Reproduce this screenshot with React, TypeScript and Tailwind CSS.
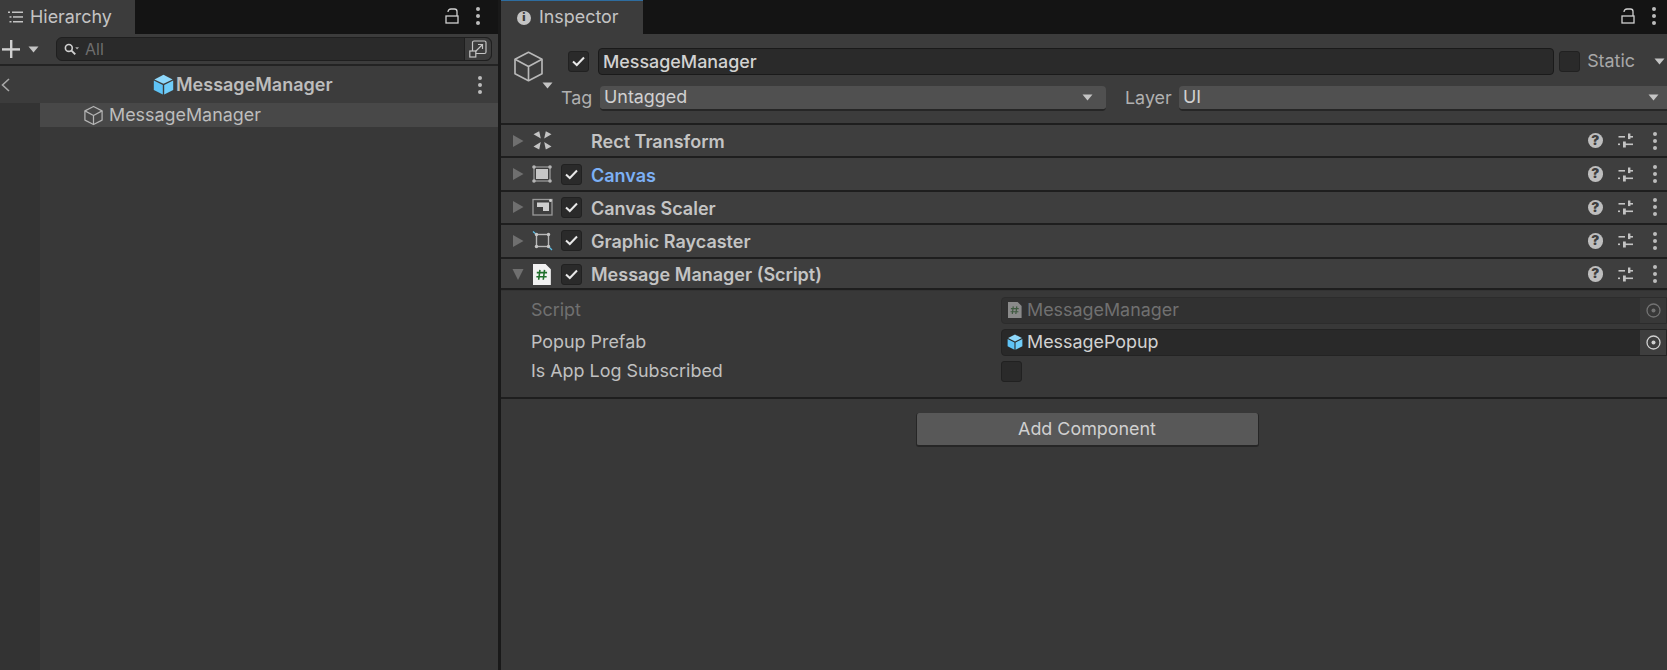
import React from "react";

function Dots({ className = "" }: { className?: string }) {
  return (
    <div className={`flex flex-col items-center gap-[3px] w-[4px] ${className}`}>
      <span className="w-[4px] h-[4px] rounded-full bg-[#bcbcbc]" />
      <span className="w-[4px] h-[4px] rounded-full bg-[#bcbcbc]" />
      <span className="w-[4px] h-[4px] rounded-full bg-[#bcbcbc]" />
    </div>
  );
}

function Lock() {
  return (
    <svg width="14" height="16" viewBox="0 0 14 16" fill="none" stroke="#d0d0d0" strokeWidth="1.3">
      <rect x="1" y="8" width="12" height="7" />
      <path d="M3 4C3 2.2 4.4 1 6 1H9.5C11 1 12 2 12 3.5V8" />
    </svg>
  );
}

function Cube({ size = 22, color = "#c2c2c2", sw = 1.4 }: { size?: number; color?: string; sw?: number }) {
  return (
    <svg width={size} height={size} viewBox="0 0 22 22" fill="none" stroke={color} strokeWidth={sw} strokeLinejoin="round">
      <path d="M11 1.5L20 6.2V15.8L11 20.5L2 15.8V6.2Z" />
      <path d="M2 6.2L11 11L20 6.2M11 11V20.5" />
    </svg>
  );
}

function BlueCube({ size = 21 }: { size?: number }) {
  return (
    <svg width={size} height={size} viewBox="0 0 21 21">
      <path d="M10.5 .8L19.6 5.4L10.5 9.8L1.4 5.4Z" fill="#8ed8fb" />
      <path d="M.8 6.6L9.8 11V20.6L.8 16Z" fill="#5ec3f6" />
      <path d="M20.2 6.6L11.2 11V20.6L20.2 16Z" fill="#6fcdfa" />
    </svg>
  );
}

function Caret({ className = "" }: { className?: string }) {
  return (
    <svg width="11" height="7" viewBox="0 0 11 7" className={className}>
      <path d="M0.5 0.5H10.5L5.5 6.5Z" fill="#c4c4c4" />
    </svg>
  );
}

function Check({ on = true }: { on?: boolean }) {
  return (
    <div className="w-[21px] h-[21px] rounded-[3px] bg-[#2a2a2a] border border-[#212121] flex items-center justify-center shrink-0">
      {on && (
        <svg width="13" height="11" viewBox="0 0 13 11" fill="none" stroke="#e8e8e8" strokeWidth="2">
          <path d="M1 5.5L4.8 9L12 1.5" />
        </svg>
      )}
    </div>
  );
}

function Help() {
  return (
    <div className="w-[15.5px] h-[15.5px] rounded-full bg-[#bebebe] flex items-center justify-center text-[13.5px] font-black leading-none text-[#3e3e3e]">
      ?
    </div>
  );
}

function Sliders() {
  return (
    <svg width="15" height="15" viewBox="0 0 15 15" fill="#c4c4c4">
      <rect x="0.5" y="3" width="6.5" height="1.6" />
      <rect x="10" y="0.5" width="2.4" height="5.6" />
      <rect x="10" y="3" width="5" height="1.6" />
      <rect x="0" y="10.5" width="2" height="1.6" />
      <rect x="5" y="8.5" width="2.8" height="6" />
      <rect x="5" y="10.5" width="10" height="1.6" />
    </svg>
  );
}

function Target({ dim = false }: { dim?: boolean }) {
  const c = dim ? "#737373" : "#d0d0d0";
  return (
    <svg width="15" height="15" viewBox="0 0 15 15" fill="none">
      <circle cx="7.5" cy="7.5" r="6.5" stroke={c} strokeWidth="1.3" />
      <circle cx="7.5" cy="7.5" r="2" fill={c} />
    </svg>
  );
}

function ScriptIcon({ dim = false, size = 21 }: { dim?: boolean; size?: number }) {
  return (
    <svg width={size * 0.85} height={size} viewBox="0 0 17 20">
      <path d="M0 0H12L17 5V20H0Z" fill={dim ? "#8a8a8a" : "#f2f2f2"} />
      <path
        d="M6.6 5.5L5.4 15M11 5.5L9.8 15M3.6 8.2H13.4M3.2 12.2H13"
        stroke={dim ? "#3f5a40" : "#20702c"}
        strokeWidth="1.5"
        fill="none"
      />
    </svg>
  );
}

function RectTransformIcon() {
  return (
    <svg width="19" height="19" viewBox="0 0 19 19" fill="#c4c4c4">
      <path d="M0.5 3.2L6.2 0.3L7.8 7.6Z" />
      <path d="M18.5 3.2L12.8 0.3L11.2 7.6Z" />
      <path d="M0.5 15.4L6.2 18.4L7.8 11Z" />
      <path d="M18.5 15.4L12.8 18.4L11.2 11Z" />
    </svg>
  );
}

function CanvasIcon() {
  return (
    <svg width="20" height="18" viewBox="0 0 20 18">
      <rect x="2" y="2" width="16" height="14" fill="#3e3e3e" stroke="#a0a0a0" strokeWidth="1.2" />
      <rect x="4" y="4" width="12" height="10" fill="#c6c6c6" />
      <circle cx="2" cy="2" r="1.8" fill="#b5b5b5" />
      <circle cx="18" cy="2" r="1.8" fill="#b5b5b5" />
      <circle cx="2" cy="16" r="1.8" fill="#b5b5b5" />
      <circle cx="18" cy="16" r="1.8" fill="#b5b5b5" />
    </svg>
  );
}

function ScalerIcon() {
  return (
    <svg width="21" height="18" viewBox="0 0 21 18" fill="none">
      <rect x="1" y="1.5" width="19" height="15.5" stroke="#9a9a9a" strokeWidth="1.3" />
      <path d="M5 4.5H17V13H11V9H5Z" fill="#cfcfcf" />
      <circle cx="18.5" cy="2.5" r="1.5" fill="#cfcfcf" />
    </svg>
  );
}

function RaycasterIcon() {
  return (
    <svg width="21" height="20" viewBox="0 0 21 20" fill="none">
      <rect x="4.5" y="3.5" width="12" height="12" stroke="#b8b8b8" strokeWidth="1.4" />
      <path d="M1 0.5L4.5 3.5M16.5 15.5L20 19" stroke="#5cc0e8" strokeWidth="1.3" />
      <circle cx="4.5" cy="3.5" r="1.7" fill="#c4c4c4" />
      <circle cx="16.5" cy="3.5" r="1.7" fill="#c4c4c4" />
      <circle cx="4.5" cy="15.5" r="1.7" fill="#c4c4c4" />
      <circle cx="16.5" cy="15.5" r="1.7" fill="#c4c4c4" />
    </svg>
  );
}

function Arrow({ open = false }: { open?: boolean }) {
  return (
    <svg width="12" height="14" viewBox="0 0 12 14" className="shrink-0">
      {open ? <path d="M0.5 2H11.5L6 13Z" fill="#6f6f6f" /> : <path d="M1 1L11.5 7L1 13Z" fill="#6f6f6f" />}
    </svg>
  );
}

function ComponentRow({
  label,
  icon,
  check = true,
  blue = false,
  open = false,
}: {
  label: string;
  icon: React.ReactNode;
  check?: boolean;
  blue?: boolean;
  open?: boolean;
}) {
  return (
    <div className={`flex items-center border-b-2 border-[#1e1e1e] bg-[#3e3e3e] pl-[11px] pr-[10px] shrink-0 ${open ? "h-[31px] border-b-0 pt-[2px]" : "h-[33.4px]"}`}>
      <Arrow open={open} />
      <div className="w-[22px] ml-[7px] flex justify-center shrink-0">{icon}</div>
      <div className="w-[21px] ml-[8px] shrink-0">{check && <Check />}</div>
      <span className={`ml-[9px] text-[18px] font-semibold ${open ? "pt-[1px]" : "pt-[2px]"} ${blue ? "text-[#7cb0f5]" : "text-[#c4c4c4]"}`}>{label}</span>
      <div className="ml-auto flex items-center">
        <Help />
        <div className="ml-[15px]">
          <Sliders />
        </div>
        <Dots className="ml-[20px]" />
      </div>
    </div>
  );
}

function ObjectField({ icon, label, dim = false }: { icon: React.ReactNode; label: string; dim?: boolean }) {
  return (
    <div className={`flex-1 flex items-center h-[27px] rounded-l-[4px] border ${dim ? "bg-[#313131] border-[#2c2c2c]" : "bg-[#292929] border-[#232323]"}`}>
      <div className="w-[16px] ml-[5px] flex justify-center shrink-0">{icon}</div>
      <span className={`ml-[4px] ${dim ? "text-[#707070] pt-[1px]" : "text-[#d2d2d2]"}`}>{label}</span>
      <div className={`ml-auto w-[26px] h-full flex items-center justify-center ${dim ? "bg-[#383838]" : "bg-[#3e3e3e]"}`}>
        <Target dim={dim} />
      </div>
    </div>
  );
}

function PropRow({ label, dim = false, className = "", children }: { label: string; dim?: boolean; className?: string; children: React.ReactNode }) {
  return (
    <div className={`flex items-center ${className}`}>
      <span className={`w-[470px] shrink-0 leading-none ${dim ? "text-[#707070]" : "text-[#c0c0c0]"}`}>{label}</span>
      {children}
    </div>
  );
}

export default function App() {
  return (
    <div className="flex w-[1667px] h-[670px] overflow-hidden bg-[#191919] text-[#c4c4c4] font-['Inter','Noto_Sans',sans-serif] text-[17.9px]">
      {/* Hierarchy */}
      <div className="w-[498px] h-full flex flex-col shrink-0">
        <div className="flex items-center h-[34px] bg-[#141414] shrink-0">
          <div className="flex items-center w-[135px] h-full bg-[#3c3c3c] pl-[8px]">
            <svg width="15" height="12" viewBox="0 0 15 12" fill="#c4c4c4">
              <rect x="0" y="0.5" width="2" height="1.5" />
              <rect x="4" y="0.5" width="11" height="1.5" />
              <rect x="1.5" y="5.2" width="2" height="1.5" />
              <rect x="5" y="5.2" width="10" height="1.5" />
              <rect x="1.5" y="10" width="2" height="1.5" />
              <rect x="5" y="10" width="10" height="1.5" />
            </svg>
            <span className="ml-[7px] text-[#c4c4c4]">Hierarchy</span>
          </div>
          <div className="ml-auto flex items-center pr-[18px] pb-[3px]">
            <Lock />
            <Dots className="ml-[17px]" />
          </div>
        </div>
        <div className="flex items-center h-[32px] bg-[#3c3c3c] border-b-2 border-[#232323] shrink-0">
          <svg width="19" height="19" viewBox="0 0 19 19" fill="#d0d0d0" className="ml-[2px]">
            <rect x="0" y="8.2" width="18" height="2.4" />
            <rect x="8" y="0" width="2.4" height="18" />
          </svg>
          <Caret className="ml-[7px]" />
          <div className="ml-[17px] flex-1 flex items-center h-[24px] rounded-[6px] bg-[#2a2a2a] border border-[#1f1f1f]">
            <svg width="15" height="13" viewBox="0 0 14 12" fill="none" className="ml-[7px]">
              <circle cx="4.5" cy="4.5" r="3.2" stroke="#d0d0d0" strokeWidth="1.5" />
              <path d="M7 7L10.5 10.5" stroke="#d0d0d0" strokeWidth="1.8" />
              <path d="M10.5 4H14L12.2 6Z" fill="#b0b0b0" />
            </svg>
            <span className="ml-[6px] text-[#6e6e6e] text-[16px]">All</span>
            <div className="ml-auto w-[27px] h-full flex items-center justify-center bg-[#3c3c3c] border-l border-[#1f1f1f] rounded-r-[6px]">
              <svg width="18" height="18" viewBox="0 0 18 18" fill="none" stroke="#c4c4c4" strokeWidth="1.2">
                <rect x="3.5" y="1" width="13.5" height="12.5" rx="1.5" />
                <rect x="0.8" y="11" width="6" height="6" fill="#3c3c3c" />
                <path d="M6.5 11.5L13 5M9 4.5H13.5V9" />
              </svg>
            </div>
          </div>
          <div className="w-[6px]" />
        </div>
        <div className="flex items-center h-[37px] bg-[#3c3c3c] shrink-0">
          <svg width="9" height="14" viewBox="0 0 9 14" fill="none" stroke="#a8a8a8" strokeWidth="1.6" className="ml-[1px]">
            <path d="M8 1L1.5 7L8 13" />
          </svg>
          <div className="flex items-center ml-[143px]">
            <BlueCube />
            <span className="ml-[2px] text-[18px] font-semibold text-[#bdbdbd]">MessageManager</span>
          </div>
          <Dots className="ml-auto mr-[16px]" />
        </div>
        <div className="flex flex-1 min-h-0">
          <div className="w-[40px] bg-[#333333]" />
          <div className="flex-1 bg-[#383838]">
            <div className="flex items-center h-[24px] bg-[#484848] pl-[43px]">
              <Cube size={21} color="#b4b4b4" sw={1.3} />
              <span className="ml-[5px] text-[#bdbdbd]">MessageManager</span>
            </div>
          </div>
        </div>
      </div>

      {/* Divider */}
      <div className="w-[3px] bg-[#191919] shrink-0" />

      {/* Inspector */}
      <div className="flex-1 h-full flex flex-col min-w-0">
        <div className="flex items-center h-[34px] bg-[#141414] shrink-0">
          <div className="flex items-center w-[142px] h-full bg-[#3c3c3c] border-t border-[#2e6da0] pl-[16px]">
            <div className="w-[14px] h-[14px] rounded-full bg-[#c4c4c4] flex items-center justify-center text-[11px] font-black leading-none text-[#3c3c3c]">
              i
            </div>
            <span className="ml-[8px]">Inspector</span>
          </div>
          <div className="ml-auto flex items-center pr-[11px] pb-[3px]">
            <Lock />
            <Dots className="ml-[17px]" />
          </div>
        </div>
        <div className="flex h-[91px] bg-[#3c3c3c] border-b-2 border-[#1e1e1e] shrink-0 pl-[11px]">
          <div className="relative w-[46px] pt-[16px] shrink-0">
            <Cube size={33} color="#b8b8b8" sw={1.1} />
            <Caret className="absolute left-[30px] top-[48px]" />
          </div>
          <div className="flex-1 min-w-0 flex flex-col">
            <div className="flex items-center mt-[14px] h-[27px]">
              <div className="ml-[10px]">
                <Check />
              </div>
              <div className="ml-[9px] flex-1 h-[27px] flex items-center rounded-[4px] bg-[#2a2a2a] border border-[#1a1a1a] pl-[4px] pt-[1px] font-medium text-[#d2d2d2]">
                MessageManager
              </div>
              <div className="ml-[5px]">
                <Check on={false} />
              </div>
              <span className="ml-[7px] text-[#a8a8a8]">Static</span>
              <Caret className="ml-[19px] mr-[2px]" />
            </div>
            <div className="flex items-center mt-[11px] h-[25px]">
              <span className="text-[#b0b0b0] w-[39px] ml-[3px] shrink-0">Tag</span>
              <div className="w-[506px] h-[25px] flex items-center rounded-[4px] bg-[#505050] border-b-2 border-[#262626] px-[4px] text-[#d0d0d0] shrink-0">
                Untagged
                <Caret className="ml-auto mr-[9px]" />
              </div>
              <span className="ml-[19px] w-[54px] text-[#b0b0b0] shrink-0">Layer</span>
              <div className="flex-1 h-[25px] flex items-center rounded-l-[4px] bg-[#505050] border-b-2 border-[#262626] px-[4px] text-[#d0d0d0]">
                UI
                <Caret className="ml-auto mr-[4px]" />
              </div>
            </div>
          </div>
        </div>

        <ComponentRow label="Rect Transform" icon={<RectTransformIcon />} check={false} />
        <ComponentRow label="Canvas" icon={<CanvasIcon />} blue />
        <ComponentRow label="Canvas Scaler" icon={<ScalerIcon />} />
        <ComponentRow label="Graphic Raycaster" icon={<RaycasterIcon />} />
        <ComponentRow label="Message Manager (Script)" icon={<ScriptIcon />} open />

        <div className="h-[109px] bg-[#383838] border-t border-[#333333] border-b-2 border-b-[#1e1e1e] shrink-0 pt-[6px] pl-[30px]">
          <PropRow label="Script" dim>
            <ObjectField icon={<ScriptIcon dim size={16} />} label="MessageManager" dim />
          </PropRow>
          <PropRow label="Popup Prefab" className="mt-[5px]">
            <ObjectField icon={<BlueCube size={16} />} label="MessagePopup" />
          </PropRow>
          <PropRow label="Is App Log Subscribed" className="mt-[5px]">
            <Check on={false} />
          </PropRow>
        </div>

        <div className="flex-1 bg-[#383838] flex justify-center items-start pt-[14px] pl-[6px]">
          <button className="w-[343px] h-[34px] rounded-[3px] bg-[#585858] border-b-2 border-x border-[#262626] pt-[1px] text-[#d0d0d0]">
            Add Component
          </button>
        </div>
      </div>
    </div>
  );
}
